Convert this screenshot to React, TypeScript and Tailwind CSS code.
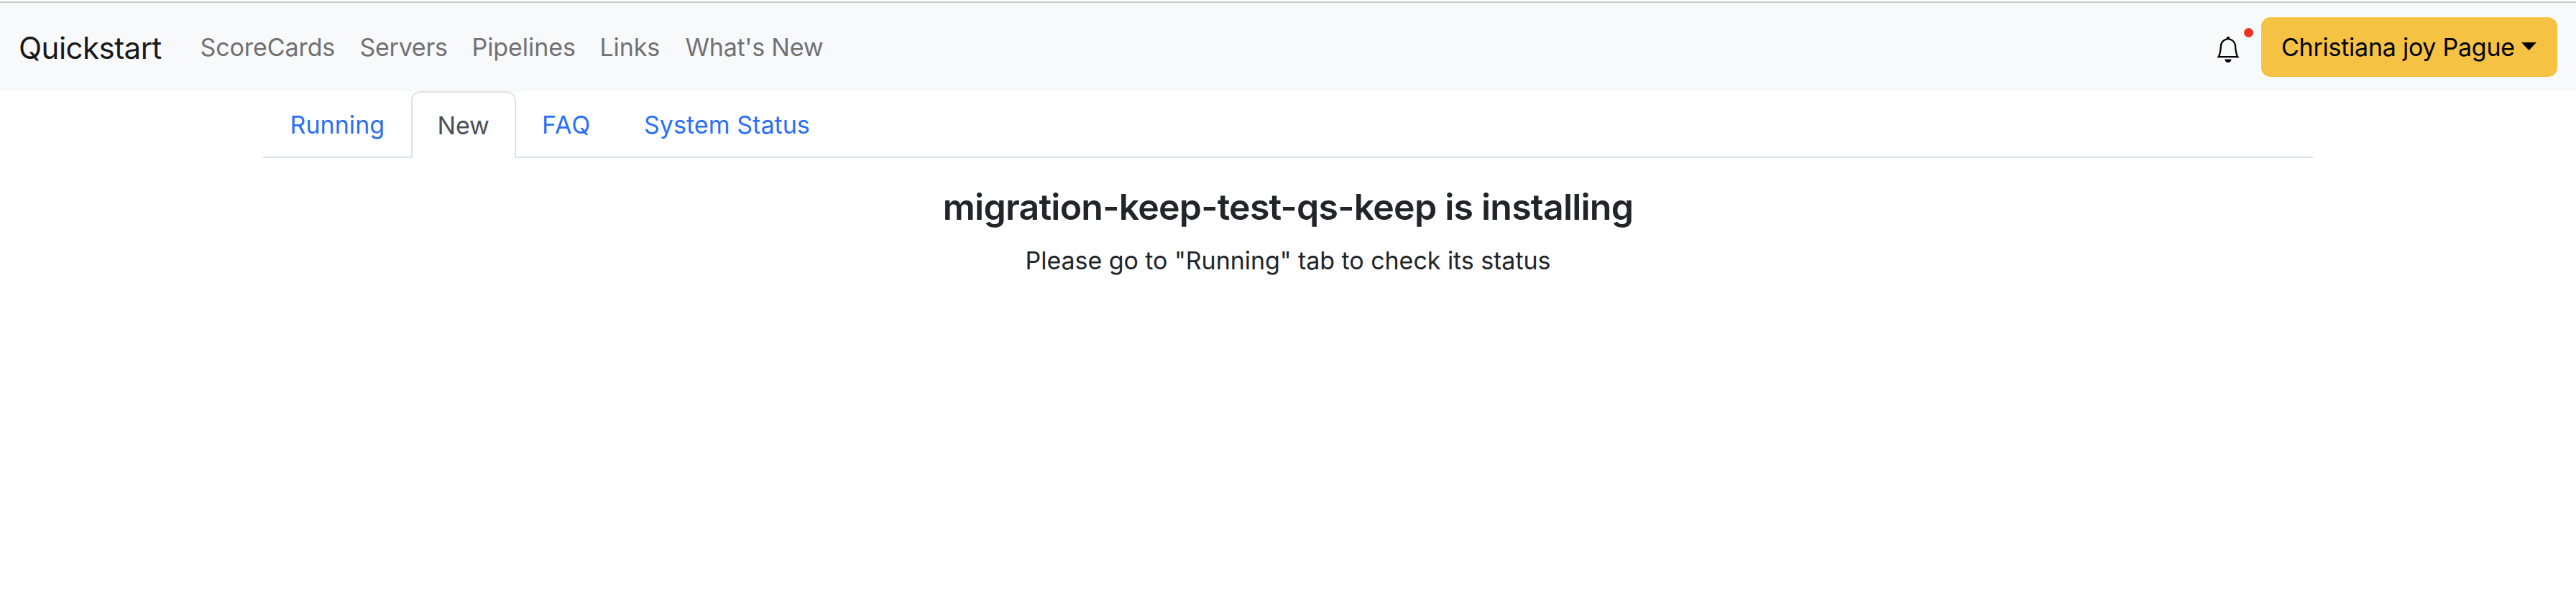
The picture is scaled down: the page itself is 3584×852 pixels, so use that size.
import { BsBell } from "react-icons/bs";

const links = [
  { label: "ScoreCards", style: "w-[222px] tracking-[-0.09px]" },
  { label: "Servers", style: "w-[156px] tracking-[-0.27px]" },
  { label: "Pipelines", style: "w-[178px] tracking-[-0.07px]" },
  { label: "Links", style: "w-[119px] tracking-[-0.1px]" },
  { label: "What's New", style: "tracking-[-0.24px]" },
];

function Navbar() {
  return (
    <nav className="flex h-[123px] items-center bg-[#f8f9fb] pr-[26px] pl-[26px]">
      <a className="w-[252.5px] pt-[3px] text-[42px] tracking-[-0.53px] text-[#191919]">Quickstart</a>
      <ul className="flex text-[#717172]">
        {links.map((l) => (
          <li key={l.label} className={l.style}>
            {l.label}
          </li>
        ))}
      </ul>
      <div className="ml-auto flex items-center">
        <div className="relative mr-[28px] pt-[7px]">
          <BsBell className="size-[36px] text-black" />
          <span className="absolute -top-[5px] left-[40px] size-[13px] rounded-full bg-[#ea3323]" />
        </div>
        <button className="flex h-[83px] w-[412px] items-center rounded-[13px] bg-[#f5c244] pl-[28px] text-black">
          <span className="w-[334px] text-left tracking-[-0.25px]">Christiana joy Pague</span>
          <svg className="mb-[3px] h-[11px] w-[21px]" viewBox="0 0 21 11">
            <path d="M0 0H21L10.5 11Z" fill="currentColor" />
          </svg>
        </button>
      </div>
    </nav>
  );
}

function Tabs() {
  return (
    <div className="mx-[366px] flex h-[93px] text-[#2a70f7]">
      <a className="flex w-[206px] items-center border-b-2 border-[#dee2e6] pt-[2px] pl-[37.5px] tracking-[0.05px]">Running</a>
      <a className="flex w-[146px] items-center rounded-t-[13px] border-2 border-b-0 border-[#dee2e6] bg-white pl-[34.5px] tracking-[-0.2px] text-[#495057]">
        New
      </a>
      <a className="flex w-[142px] items-center border-b-2 border-[#dee2e6] pt-[2px] pl-[36px] tracking-[1px]">FAQ</a>
      <a className="flex grow items-center border-b-2 border-[#dee2e6] pt-[2px] pl-[36px] tracking-[0.05px]">System Status</a>
    </div>
  );
}

export default function App() {
  return (
    <div className="min-h-[852px] bg-white pt-[2px] font-['Inter',sans-serif] text-[34px] leading-[54px] whitespace-nowrap text-[#212529]">
      <div className="h-[2px] bg-[#cacdcc]" />
      <Navbar />
      <Tabs />
      <main className="pt-[38px] text-center">
        <h4 className="text-[50px] leading-[60px] font-[560] tracking-[-0.77px]">migration-keep-test-qs-keep is installing</h4>
        <p className="mt-[18px] tracking-[-0.05px]">Please go to "Running" tab to check its status</p>
      </main>
    </div>
  );
}
